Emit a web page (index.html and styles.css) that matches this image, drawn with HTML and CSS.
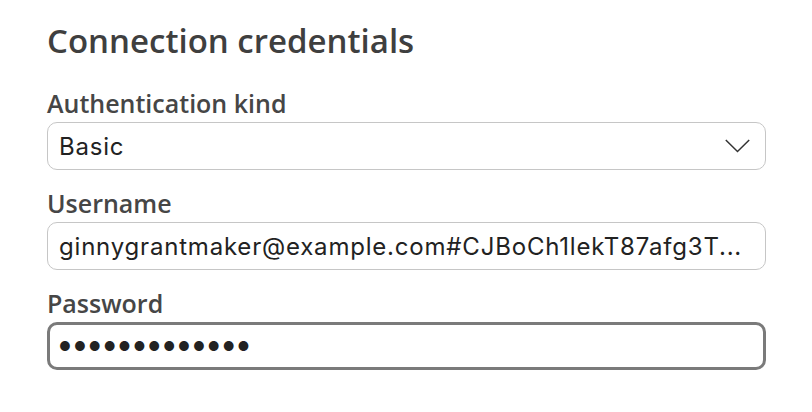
FILE: index.html
```html
<!DOCTYPE html>
<html>
<head>
<meta charset="utf-8">
<link rel="stylesheet" href="styles.css">
</head>
<body>
<div class="panel">
  <h1 class="title">Connection credentials</h1>
  <div class="field">
    <label class="label">Authentication kind</label>
    <div class="box select">
      <span class="value">Basic</span>
      <svg class="chevron" width="25" height="14" viewBox="0 0 25 14"><path d="M0.8 1 L12.5 12.5 L24.2 1" fill="none" stroke="#333" stroke-width="1.5"/></svg>
    </div>
  </div>
  <div class="field">
    <label class="label">Username</label>
    <div class="box">
      <span class="value">ginnygrantmaker@example.com#CJBoCh1lekT87afg3T...</span>
    </div>
  </div>
  <div class="field">
    <label class="label">Password</label>
    <div class="box focused">
      <span class="value dots">●●●●●●●●●●●●●</span>
    </div>
  </div>
</div>
</body>
</html>
```
FILE: styles.css
```css
* { box-sizing: border-box; }
html, body { margin: 0; padding: 0; background: #fff; }
.panel {
  width: 812px;
  height: 412px;
  padding: 21px 46px 0 47px;
  font-family: "Open Sans", "Noto Sans", sans-serif;
}
.title {
  margin: 0 0 27px 0;
  font-size: 33px;
  font-weight: 600;
  color: #3f3f3f;
  line-height: 40px;
}
.field { display: flex; flex-direction: column; }
.label {
  font-size: 25px;
  font-weight: 600;
  color: #464646;
  line-height: 30px;
  margin-bottom: 4px;
}
.field + .field { margin-top: 18px; }
.box {
  height: 48px;
  border: 1.5px solid #c6c6c6;
  border-radius: 10px;
  display: flex;
  align-items: center;
  padding: 0 11px;
  font-family: "Inter", "Liberation Sans", sans-serif;
}
.select { justify-content: space-between; padding-right: 15px; }
.value {
  font-size: 24px;
  letter-spacing: 0.8px;
  color: #222;
  white-space: nowrap;
  overflow: hidden;
}
.focused {
  border: 3px solid #7a7a7a;
  padding-left: 9px;
}
.dots { font-size: 13px; letter-spacing: 3px; color: #222; }
.chevron { display: block; }
```
